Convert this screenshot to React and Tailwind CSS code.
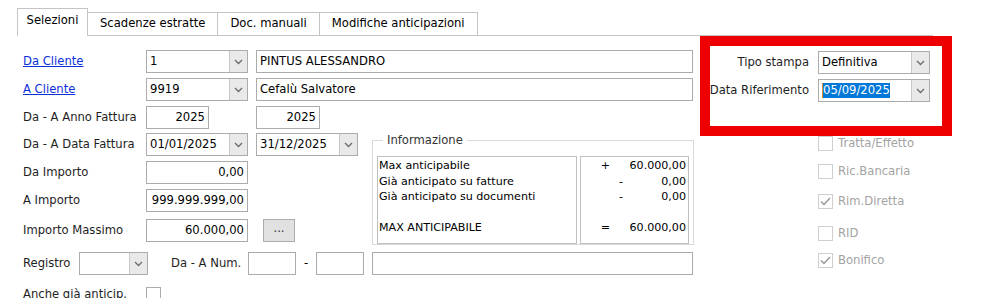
import React from "react";

// chevron for the combo drop buttons
const Chevron = () => (
  <svg width="9" height="6" viewBox="0 0 9 6">
    <path d="M1 1 L4.5 4.5 L8 1" fill="none" stroke="#6b6b6b" strokeWidth="1.3" />
  </svg>
);

const Combo = ({ w, value, selected }) => (
  <div
    className={`flex h-[23px] shrink-0 border border-[#acacac] bg-white ${w}`}>
    <div className="flex flex-1 items-center overflow-hidden pl-[3px]">
      {selected ? (
        <span className="border-l border-[#e08a2c] bg-[#0078d7] text-white leading-[15px]">{value}</span>
      ) : (
        <span>{value}</span>
      )}
    </div>
    <div className="flex w-[18px] items-center justify-center border-l border-[#c8c8c8] bg-[#e9e9e9]">
      <Chevron />
    </div>
  </div>
);

const Input = ({ w, value, right }) => (
  <div
    className={`flex h-[23px] shrink-0 items-center border border-[#acacac] bg-white px-[3px] ${w} ${
      right ? "justify-end" : ""
    }`}>
    {value}
  </div>
);

const Label = ({ children, link }) => (
  <div
    className={`w-[123px] shrink-0 whitespace-nowrap ${
      link ? "text-[#0b2fd8] underline" : "text-[#1e1e1e]"
    }`}>
    {children}
  </div>
);

const Check = ({ label, checked, mt }) => (
  <div className={`flex h-[15px] items-center gap-[5px] leading-[15px] ${mt}`}>
    <div className="flex h-[15px] w-[15px] items-center justify-center border border-[#cfcfcf] bg-white">
      {checked && (
        <svg width="11" height="9" viewBox="0 0 11 9">
          <path d="M1 4.5 L4 7.5 L10 1" fill="none" stroke="#9a9a9a" strokeWidth="1.5" />
        </svg>
      )}
    </div>
    <span className="text-[#a3a3a3]">{label}</span>
  </div>
);

const tabs = ["Scadenze estratte", "Doc. manuali", "Modifiche anticipazioni"];

const infoRows = [
  ["+", "60.000,00", "w-[29px]"],
  ["-", "0,00", "w-[42px]"],
  ["-", "0,00", "w-[42px]"],
];

export default function App() {
  return (
    <div className="relative h-[298px] w-[1008px] overflow-hidden bg-white font-['DejaVu_Sans',sans-serif] text-[11.6px] text-black">
      {/* tab strip */}
      <div className="flex items-end pl-[17px] pt-[8px]">
        <div className="flex h-[28px] w-[71px] items-center justify-center border border-b-0 border-[#c4c4c4] bg-white pb-[3px]">
          Selezioni
        </div>
        {tabs.map((t) => (
          <div
            key={t}
            className="flex h-[24px] items-center border border-l-0 border-[#c4c4c4] bg-white px-[12px]">
            {t}
          </div>
        ))}
        <div className="h-[1px] w-[455px] bg-[#c4c4c4]" />
      </div>

      <div className="flex pt-[14px]">
        {/* left form */}
        <div className="w-[694px] shrink-0 pl-[23px]">
          <div className="flex items-center">
            <Label link>Da Cliente</Label>
            <Combo w="w-[102px]" value="1" />
            <div className="w-[8px]" />
            <Input w="w-[437px]" value="PINTUS ALESSANDRO" />
          </div>
          <div className="mt-[5px] flex items-center">
            <Label link>A Cliente</Label>
            <Combo w="w-[102px]" value="9919" />
            <div className="w-[8px]" />
            <Input w="w-[437px]" value="Cefalù Salvatore" />
          </div>
          <div className="mt-[5px] flex items-center">
            <Label>Da - A Anno Fattura</Label>
            <Input w="w-[63px]" value="2025" right />
            <div className="w-[47px]" />
            <Input w="w-[64px]" value="2025" right />
          </div>

          <div className="flex">
            <div className="w-[335px] shrink-0">
              <div className="mt-[4px] flex items-center">
                <Label>Da - A Data Fattura</Label>
                <Combo w="w-[102px]" value="01/01/2025" />
                <div className="w-[8px]" />
                <Combo w="w-[102px]" value="31/12/2025" />
              </div>
              <div className="mt-[5px] flex items-center">
                <Label>Da Importo</Label>
                <Input w="w-[102px]" value="0,00" right />
              </div>
              <div className="mt-[5px] flex items-center">
                <Label>A Importo</Label>
                <Input w="w-[102px]" value="999.999.999,00" right />
              </div>
              <div className="mt-[7px] flex items-center">
                <Label>Importo Massimo</Label>
                <Input w="w-[102px]" value="60.000,00" right />
                <div className="w-[15px]" />
                <div className="flex h-[23px] w-[32px] items-center justify-center border border-[#adadad] bg-[#e1e1e1] pb-[4px] text-[#333]">
                  ...
                </div>
              </div>
            </div>

            {/* Informazione group */}
            <div className="relative ml-[14px] mt-[11px] h-[105px] w-[322px] border border-[#d9d9d9]">
              <span className="absolute left-[10px] top-[-9px] bg-white px-[4px] text-[#333]">
                Informazione
              </span>
              <div className="mt-[15px] flex h-[88px] pl-[4px] text-[11.1px] leading-[15.5px]">
                <div className="w-[200px] border border-[#c0c0c0] pl-[1px] pt-[1px]">
                  <div>Max anticipabile</div>
                  <div>Già anticipato su fatture</div>
                  <div>Già anticipato su documenti</div>
                  <div className="mt-[15px]">MAX ANTICIPABILE</div>
                </div>
                <div className="ml-[3px] w-[109px] border border-[#c0c0c0] pr-[2px] pt-[1px]">
                  {infoRows.map(([s, v, sw], i) => (
                    <div key={i} className="flex">
                      <span className={`${sw} text-right`}>{s}</span>
                      <span className="flex-1 text-right">{v}</span>
                    </div>
                  ))}
                  <div className="mt-[15px] flex">
                    <span className="w-[29px] text-right">=</span>
                    <span className="flex-1 text-right">60.000,00</span>
                  </div>
                </div>
              </div>
            </div>
          </div>

          <div className="mt-[7px] flex items-center">
            <div className="w-[56px] shrink-0 text-[#1e1e1e]">Registro</div>
            <Combo w="w-[69px]" value="" />
            <div className="w-[23px]" />
            <div className="w-[77px] shrink-0 text-[#1e1e1e]">Da - A Num.</div>
            <Input w="w-[48px]" value="" />
            <div className="w-[20px] text-center">-</div>
            <Input w="w-[48px]" value="" />
            <div className="w-[8px]" />
            <Input w="w-[321px]" value="" />
          </div>
          <div className="mt-[11px] flex items-center">
            <Label>Anche già anticip.</Label>
            <div className="h-[15px] w-[15px] border border-[#acacac] bg-white" />
          </div>
        </div>

        {/* right column */}
        <div className="ml-[16px] w-[220px] shrink-0">
          <div className="mt-[1px] flex items-center">
            <div className="flex w-[99px] shrink-0 justify-end whitespace-nowrap text-[#1e1e1e]">Tipo stampa</div>
            <div className="w-[9px]" />
            <Combo w="w-[112px]" value="Definitiva" />
          </div>
          <div className="mt-[5px] flex items-center">
            <div className="flex w-[99px] shrink-0 justify-end whitespace-nowrap text-[#1e1e1e]">Data Riferimento</div>
            <div className="w-[9px]" />
            <Combo w="w-[112px]" value="05/09/2025" selected />
          </div>
          <div className="ml-[108px] mt-[34px] flex flex-col">
            <Check label="Tratta/Effetto" />
            <Check label="Ric.Bancaria" mt="mt-[13px]" />
            <Check label="Rim.Diretta" checked mt="mt-[15px]" />
            <Check label="RID" mt="mt-[17px]" />
            <Check label="Bonifico" checked mt="mt-[12px]" />
          </div>
        </div>
      </div>

      {/* red annotation frame */}
      <div className="absolute left-[700px] top-[36px] h-[100px] w-[252px] border-[10px] border-[#ee0000]" />
    </div>
  );
}
